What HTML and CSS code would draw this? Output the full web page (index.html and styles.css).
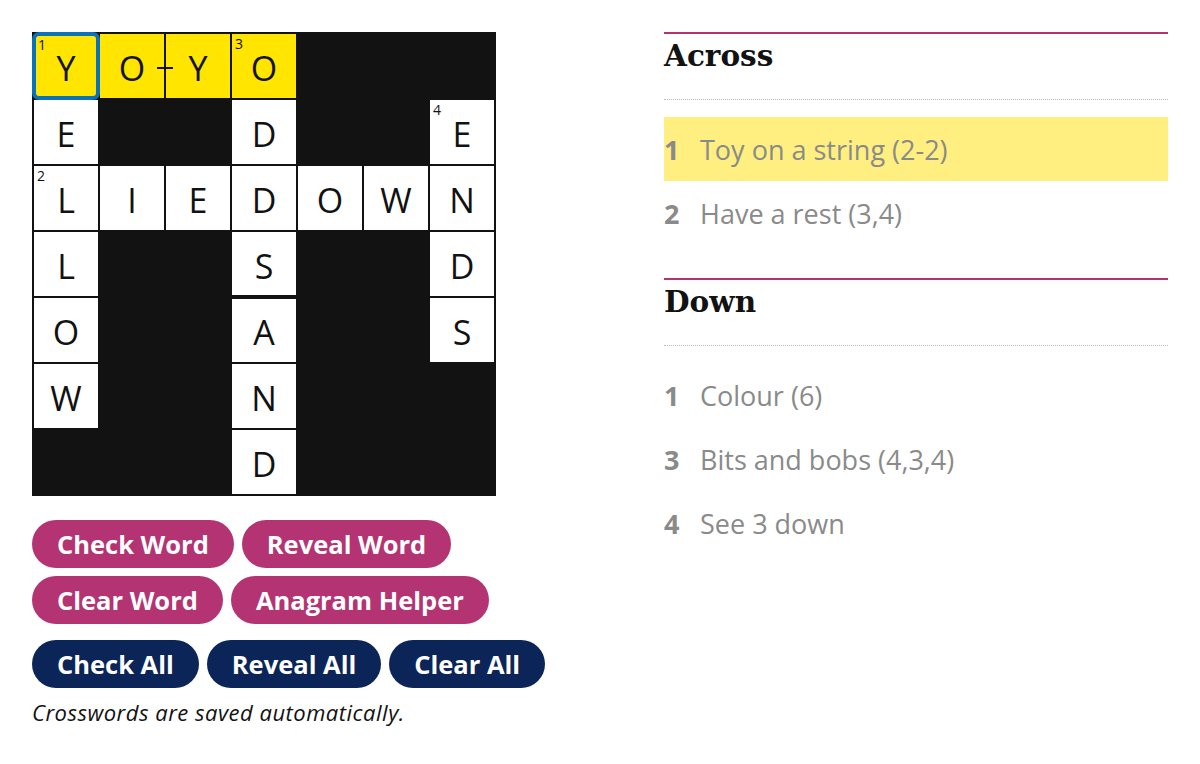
FILE: index.html
```html
<!DOCTYPE html>
<html lang="en">
<head>
<meta charset="utf-8">
<title>Crossword</title>
<link rel="stylesheet" href="styles.css">
</head>
<body>
<div class="page">
  <div class="left">
    <div class="grid">
      <div class="cell hl sel"><span class="num">1</span>Y</div>
      <div class="cell hl hyph-r">O</div>
      <div class="cell hl">Y</div>
      <div class="cell hl"><span class="num">3</span>O</div>
      <div class="cell blk"></div>
      <div class="cell blk"></div>
      <div class="cell blk"></div>

      <div class="cell">E</div>
      <div class="cell blk"></div>
      <div class="cell blk"></div>
      <div class="cell">D</div>
      <div class="cell blk"></div>
      <div class="cell blk"></div>
      <div class="cell"><span class="num">4</span>E</div>

      <div class="cell"><span class="num">2</span>L</div>
      <div class="cell">I</div>
      <div class="cell">E</div>
      <div class="cell">D</div>
      <div class="cell">O</div>
      <div class="cell">W</div>
      <div class="cell">N</div>

      <div class="cell">L</div>
      <div class="cell blk"></div>
      <div class="cell blk"></div>
      <div class="cell sep-b">S</div>
      <div class="cell blk"></div>
      <div class="cell blk"></div>
      <div class="cell">D</div>

      <div class="cell">O</div>
      <div class="cell blk"></div>
      <div class="cell blk"></div>
      <div class="cell">A</div>
      <div class="cell blk"></div>
      <div class="cell blk"></div>
      <div class="cell">S</div>

      <div class="cell">W</div>
      <div class="cell blk"></div>
      <div class="cell blk"></div>
      <div class="cell">N</div>
      <div class="cell blk"></div>
      <div class="cell blk"></div>
      <div class="cell blk"></div>

      <div class="cell blk"></div>
      <div class="cell blk"></div>
      <div class="cell blk"></div>
      <div class="cell">D</div>
      <div class="cell blk"></div>
      <div class="cell blk"></div>
      <div class="cell blk"></div>
    </div>

    <div class="controls">
      <div class="btn-row">
        <button class="btn pink">Check Word</button>
        <button class="btn pink">Reveal Word</button>
      </div>
      <div class="btn-row">
        <button class="btn pink">Clear Word</button>
        <button class="btn pink">Anagram Helper</button>
      </div>
      <div class="btn-row all">
        <button class="btn navy">Check All</button>
        <button class="btn navy">Reveal All</button>
        <button class="btn navy">Clear All</button>
      </div>
    </div>
    <p class="saved">Crosswords are saved automatically.</p>
  </div>

  <div class="clues">
    <section class="clue-group">
      <h2 class="clue-title">Across</h2>
      <ol class="clue-list">
        <li class="clue active"><span class="clue-num">1</span><span class="clue-text">Toy on a string (2-2)</span></li>
        <li class="clue"><span class="clue-num">2</span><span class="clue-text">Have a rest (3,4)</span></li>
      </ol>
    </section>
    <section class="clue-group down">
      <h2 class="clue-title">Down</h2>
      <ol class="clue-list">
        <li class="clue"><span class="clue-num">1</span><span class="clue-text">Colour (6)</span></li>
        <li class="clue"><span class="clue-num">3</span><span class="clue-text">Bits and bobs (4,3,4)</span></li>
        <li class="clue"><span class="clue-num">4</span><span class="clue-text">See 3 down</span></li>
      </ol>
    </section>
  </div>
</div>
</body>
</html>
```

FILE: styles.css
```css
* { box-sizing: border-box; }

html, body {
  margin: 0;
  padding: 0;
  background: #ffffff;
}

body {
  font-family: "Open Sans", "Noto Sans", Arial, sans-serif;
  color: #121212;
}

.page {
  display: flex;
  align-items: flex-start;
  gap: 112px;
  padding: 32px;
}

.left {
  width: 520px;
  flex: none;
}

.grid {
  display: grid;
  grid-template-columns: repeat(7, 64px);
  grid-auto-rows: 64px;
  gap: 2px;
  padding: 2px;
  width: 464px;
  background: #121212;
}

.cell {
  position: relative;
  background: #ffffff;
  display: flex;
  align-items: center;
  justify-content: center;
  font-size: 34px;
  line-height: 1;
  padding-top: 4px;
  color: #121212;
}

.cell.blk { background: #121212; }
.cell.hl { background: #ffe500; }

.cell.sel { z-index: 2; }

.cell.sel::after {
  content: "";
  position: absolute;
  left: -2px;
  top: -2px;
  right: -2px;
  bottom: -2px;
  border: 4px solid #0b72b7;
  border-radius: 7px;
}

.num {
  position: absolute;
  left: 3px;
  top: 3px;
  font-size: 14px;
  line-height: 1;
}

.cell.sel .num { left: 4px; top: 4px; }

.hyph-r::before {
  content: "";
  position: absolute;
  right: -9px;
  top: 33px;
  width: 16px;
  height: 2px;
  background: #121212;
  z-index: 1;
}

.sep-b::before {
  content: "";
  position: absolute;
  left: 0;
  right: 0;
  bottom: -3px;
  height: 4px;
  background: #121212;
  z-index: 1;
}

.controls {
  margin-top: 24px;
  display: flex;
  flex-direction: column;
  gap: 8px;
}

.btn-row {
  display: flex;
  gap: 8px;
}

.btn-row.all { margin-top: 8px; }

.btn {
  height: 48px;
  border: 0;
  border-radius: 24px;
  padding: 0 25px;
  font-family: "Open Sans", "Noto Sans", Arial, sans-serif;
  font-weight: 700;
  font-size: 25.5px;
  letter-spacing: 0;
  color: #ffffff;
  cursor: pointer;
}

.btn.pink { background: #b33373; }
.btn.navy { background: #0b2558; }

.saved {
  margin: 12px 0 0;
  font-style: italic;
  font-size: 22px;
  line-height: 24px;
  letter-spacing: 0.5px;
  color: #121212;
}

.clues {
  width: 504px;
  flex: none;
}

.clue-group {
  border-top: 2px solid #b33373;
}

.clue-group.down { margin-top: 33px; }

.clue-title {
  margin: 0;
  height: 66px;
  padding-top: 4px;
  font-family: "DejaVu Serif", "Liberation Serif", serif;
  font-weight: 700;
  font-size: 29.5px;
  line-height: 36px;
  letter-spacing: 0;
  border-bottom: 1px dotted #bdbdbd;
  color: #121212;
}

.clue-list {
  list-style: none;
  margin: 0;
  padding: 17px 0 0;
}

.clue {
  display: flex;
  align-items: center;
  height: 64px;
  font-size: 27px;
  color: #8a8a8a;
}

.clue.active { background: #ffef80; }

.clue-num {
  width: 36px;
  flex: none;
  font-weight: 700;
}
```
